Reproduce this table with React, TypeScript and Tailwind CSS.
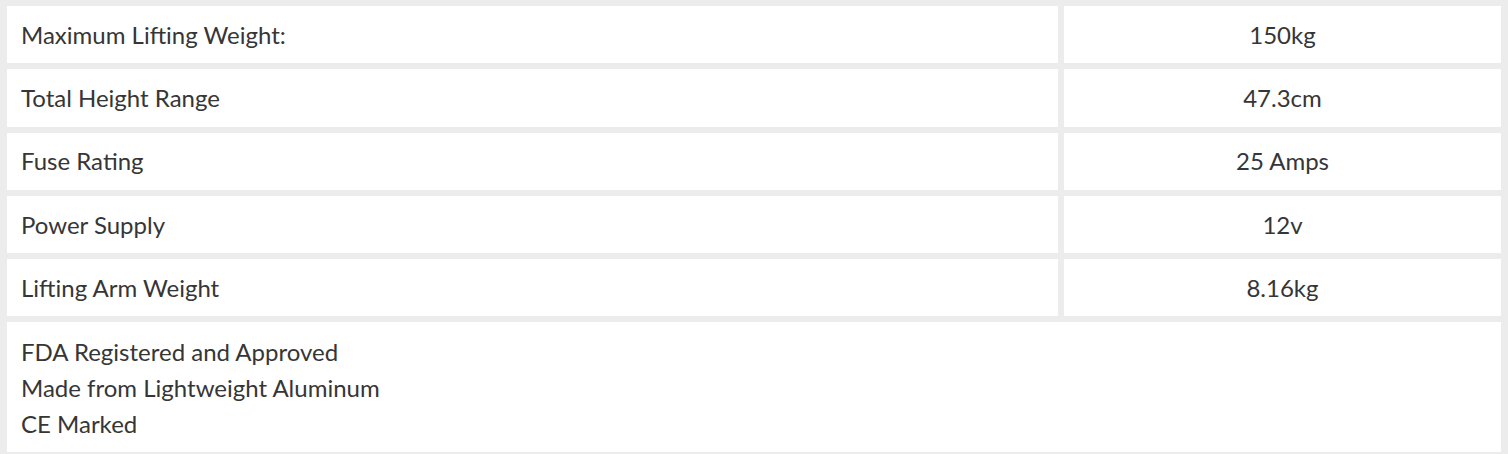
const specs = [
  { label: 'Maximum Lifting Weight:', value: '150kg' },
  { label: 'Total Height Range', value: '47.3cm' },
  { label: 'Fuse Rating', value: '25 Amps' },
  { label: 'Power Supply', value: '12v' },
  { label: 'Lifting Arm Weight', value: '8.16kg' },
];

const notes = ['FDA Registered and Approved', 'Made from Lightweight Aluminum', 'CE Marked'];

export default function App() {
  return (
    <div
      className="w-[1508px] h-[454px] overflow-hidden bg-[#ececec] pt-[6px] pl-[7px] pr-[7px] text-[#363636] text-[24px]"
      style={{ fontFamily: 'Lato, "Open Sans", sans-serif' }}
    >
      <div className="grid grid-cols-[1051px_1fr] gap-[6px]">
        {specs.map((s) => (
          <div key={s.label} className="contents">
            <div className="bg-white h-[57.3px] flex items-center pl-[14px]">{s.label}</div>
            <div className="bg-white h-[57.3px] flex items-center justify-center">{s.value}</div>
          </div>
        ))}
        {/* notes row spans full width */}
        <div className="col-span-2 bg-white pl-[14px] pt-[12px] pb-[10px] leading-[36px]">
          {notes.map((n) => (
            <div key={n}>{n}</div>
          ))}
        </div>
      </div>
    </div>
  );
}
